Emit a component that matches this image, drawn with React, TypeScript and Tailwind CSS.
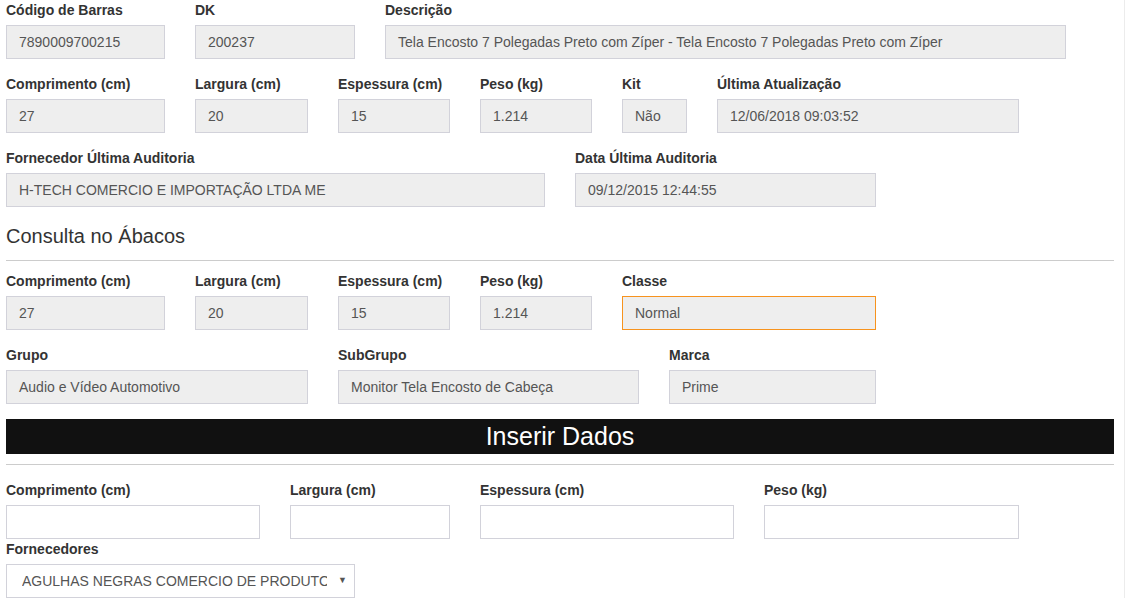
const font = { fontFamily: '"Liberation Sans", Arial, sans-serif' }

type FieldProps = {
  label: string
  value?: string
  w: string
  white?: boolean
  highlight?: boolean
}

function Field({ label, value = '', w, white, highlight }: FieldProps) {
  return (
    <div className={`${w} shrink-0`}>
      <div className="text-[14px] leading-[20px] font-bold text-[#333] mb-[5px] whitespace-nowrap">{label}</div>
      <div
        className={`h-[34px] px-[12px] py-[6px] text-[14px] leading-[20px] text-[#555] whitespace-nowrap overflow-hidden border ${
          highlight ? 'border-[#f7931e]' : 'border-[#d2d2da]'
        } ${white ? 'bg-white' : 'bg-[#eeeeee]'}`}
      >
        {value}
      </div>
    </div>
  )
}

export default function App() {
  return (
    <div className="min-h-[598px] bg-white" style={font}>
      <div className="w-[1125px] min-h-[598px] border-r border-[#ececec] pl-[6px]">
        <div className="w-[1108px]">
          <div className="flex gap-[30px] mb-[15px]">
            <Field label="Código de Barras" value="7890009700215" w="w-[159px]" />
            <Field label="DK" value="200237" w="w-[160px]" />
            <Field
              label="Descrição"
              value="Tela Encosto 7 Polegadas Preto com Zíper - Tela Encosto 7 Polegadas Preto com Zíper"
              w="w-[681px]"
            />
          </div>

          <div className="flex gap-[30px] mb-[15px]">
            <Field label="Comprimento (cm)" value="27" w="w-[159px]" />
            <Field label="Largura (cm)" value="20" w="w-[113px]" />
            <Field label="Espessura (cm)" value="15" w="w-[112px]" />
            <Field label="Peso (kg)" value="1.214" w="w-[112px]" />
            <Field label="Kit" value="Não" w="w-[65px]" />
            <Field label="Última Atualização" value="12/06/2018 09:03:52" w="w-[302px]" />
          </div>

          <div className="flex gap-[30px] mb-[15px]">
            <Field label="Fornecedor Última Auditoria" value="H-TECH COMERCIO E IMPORTAÇÃO LTDA ME" w="w-[539px]" />
            <Field label="Data Última Auditoria" value="09/12/2015 12:44:55" w="w-[301px]" />
          </div>

          <h3 className="pt-[3px] text-[20px] leading-[22px] text-[#333]">Consulta no Ábacos</h3>
          <hr className="mt-[13px] mb-[10px] border-0 border-t border-[#cccccc]" />

          <div className="flex gap-[30px] mb-[15px]">
            <Field label="Comprimento (cm)" value="27" w="w-[159px]" />
            <Field label="Largura (cm)" value="20" w="w-[113px]" />
            <Field label="Espessura (cm)" value="15" w="w-[112px]" />
            <Field label="Peso (kg)" value="1.214" w="w-[112px]" />
            <Field label="Classe" value="Normal" w="w-[254px]" highlight />
          </div>

          <div className="flex gap-[30px] mb-[15px]">
            <Field label="Grupo" value="Audio e Vídeo Automotivo" w="w-[302px]" />
            <Field label="SubGrupo" value="Monitor Tela Encosto de Cabeça" w="w-[301px]" />
            <Field label="Marca" value="Prime" w="w-[207px]" />
          </div>

          <div className="h-[35px] bg-[#111111] text-white text-[25px] leading-[35px] text-center">Inserir Dados</div>
          <hr className="mt-[10px] mb-[15px] border-0 border-t border-[#cccccc]" />

          <div className="flex gap-[30px]">
            <Field label="Comprimento (cm)" w="w-[254px]" white />
            <Field label="Largura (cm)" w="w-[160px]" white />
            <Field label="Espessura (cm)" w="w-[254px]" white />
            <Field label="Peso (kg)" w="w-[255px]" white />
          </div>

          <div className="w-[349px]">
            <div className="text-[14px] leading-[20px] font-bold text-[#333] mb-[5px]">Fornecedores</div>
            <div className="h-[34px] flex items-center border border-[#d2d2da] bg-white pl-[15px] pr-[7px]">
              <div className="w-[305px] overflow-hidden whitespace-nowrap text-[14px] leading-[20px] text-[#555]">
                AGULHAS NEGRAS COMERCIO DE PRODUTOS LTDA
              </div>
              <div className="ml-auto text-[9px] text-[#555]">▼</div>
            </div>
          </div>
        </div>
      </div>
    </div>
  )
}
